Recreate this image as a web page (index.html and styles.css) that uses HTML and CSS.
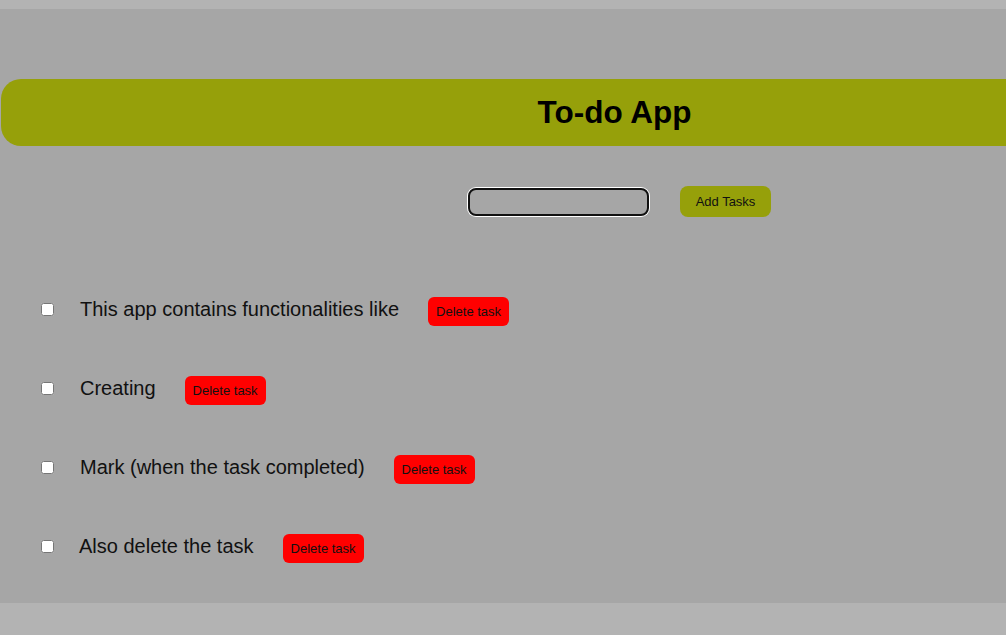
FILE: index.html
```html
<!DOCTYPE html>
<html>
<head>
<meta charset="utf-8">
<link rel="stylesheet" href="styles.css">
</head>
<body>
<div class="app">
  <div class="header"><h1 class="title">To-do App</h1></div>
  <div class="add-row">
    <input class="task-input" type="text">
    <button class="add-btn">Add Tasks</button>
  </div>
  <ul class="tasks">
    <li class="task"><input type="checkbox" class="check"><span class="task-text">This app contains functionalities like</span><button class="del-btn">Delete task</button></li>
    <li class="task"><input type="checkbox" class="check"><span class="task-text">Creating</span><button class="del-btn">Delete task</button></li>
    <li class="task"><input type="checkbox" class="check"><span class="task-text">Mark (when the task completed)</span><button class="del-btn">Delete task</button></li>
    <li class="task"><input type="checkbox" class="check"><span class="task-text task-text-last">Also delete the task</span><button class="del-btn">Delete task</button></li>
  </ul>
</div>
</body>
</html>
```
FILE: styles.css
```css
html, body {
  margin: 0;
  padding: 0;
}
body {
  background: #b3b3b3;
  font-family: "Liberation Sans", Arial, sans-serif;
  overflow: hidden;
  height: 635px;
}
.app {
  margin-top: 9px;
  height: 594px;
  background: #a6a6a6;
  overflow: hidden;
  padding-top: 70px;
  box-sizing: border-box;
}
.header {
  margin-left: 1px;
  width: 1227px;
  height: 67px;
  background: #96a00a;
  border-radius: 20px 0 0 20px;
  display: flex;
  align-items: center;
  justify-content: center;
}
.title {
  margin: 0;
  font-size: 31.5px;
  font-weight: bold;
  color: #000;
}
.add-row {
  display: flex;
  align-items: center;
  gap: 31px;
  padding-left: 468px;
  margin-top: 40px;
}
.task-input {
  width: 181px;
  height: 28px;
  box-sizing: border-box;
  border: 2px solid #111;
  border-radius: 8px;
  box-shadow: 0 0 0 1px #fff;
  background: #a6a6a6;
  margin: 0;
  padding: 0 6px;
}
.add-btn {
  width: 91px;
  height: 31px;
  border: none;
  border-radius: 8px;
  background: #96a00a;
  font-family: "Liberation Sans", Arial, sans-serif;
  font-size: 13px;
  color: #111;
  padding: 0;
  margin: 0;
}
.tasks {
  list-style: none;
  margin: 80px 0 0 0;
  padding: 0 0 0 41px;
  display: flex;
  flex-direction: column;
  gap: 50px;
}
.task {
  display: flex;
  align-items: center;
  height: 29px;
}
.check {
  width: 13px;
  height: 13px;
  margin: 0 0 4px 0;
}
.task-text {
  margin-left: 26px;
  font-size: 20px;
  color: #111;
  position: relative;
  top: -2px;
}
.task-text-last {
  margin-left: 25px;
}
.del-btn {
  margin-left: 29px;
  width: 81px;
  height: 29px;
  border: none;
  border-radius: 6px;
  background: #ff0000;
  font-family: "Liberation Sans", Arial, sans-serif;
  font-size: 13px;
  color: #111;
  padding: 0;
}
```
